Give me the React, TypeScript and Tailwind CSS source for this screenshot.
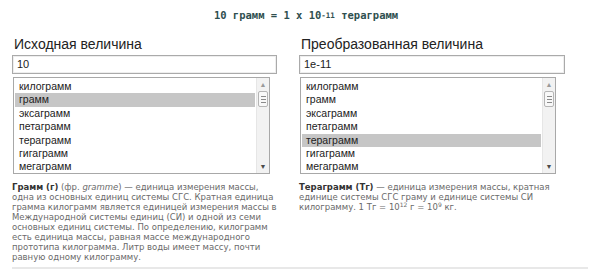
import React from 'react';

const units = ['килограмм', 'грамм', 'эксаграмм', 'петаграмм', 'тераграмм', 'гигаграмм', 'мегаграмм'];

const Scrollbar: React.FC = () => (
    <div className="flex flex-col w-[13px] bg-[#f2f2f2] border-l border-[#e6e6e6]">
        <div className="h-[13px] flex items-center justify-center text-[#9a9a9a] text-[7px] leading-none">▲</div>
        <div className="h-[16px] mx-[1px] bg-[#f8f8f8] border border-[#b5b5b5] rounded-[2px] flex flex-col items-center justify-center gap-[2px]">
            <div className="w-[5px] h-px bg-[#8a8a8a]" />
            <div className="w-[5px] h-px bg-[#8a8a8a]" />
            <div className="w-[5px] h-px bg-[#8a8a8a]" />
        </div>
        <div className="flex-1" />
        <div className="h-[13px] flex items-center justify-center text-[#4a4a4a] text-[7px] leading-none">▼</div>
    </div>
);

interface ColumnProps {
    title: string;
    value: string;
    selected: number;
    inputWidth: string;
    listWidth: string;
    children: React.ReactNode;
}

const Column: React.FC<ColumnProps> = ({ title, value, selected, inputWidth, listWidth, children }) => (
    <div className="flex flex-col">
        <h2 className="text-[14px] leading-[18px] pl-[2px] text-[#222] font-['Liberation_Sans',Arial,sans-serif]">{title}</h2>
        <div className={`${inputWidth} h-[19px] mt-[2px] border border-[#aaa] shadow-[inset_0_0_0_1px_#eee] px-[4px] flex items-center text-[11px] text-[#222] font-['Liberation_Sans',Arial,sans-serif]`}>
            {value}
        </div>
        <div className={`${listWidth} h-[97px] mt-[3px] ml-[1px] border border-[#a8a8a8] flex bg-white`}>
            <div className="flex-1 flex flex-col pt-[2px] pl-[1px] pr-[1px]">
                {units.map((u, i) => (
                    <div
                        key={u}
                        className={`h-[13.4px] leading-[13.4px] pl-[4px] text-[10.5px] text-[#222] font-['Liberation_Sans',Arial,sans-serif] ${i === selected ? 'bg-[#c6c6c6]' : ''}`}
                    >
                        {u}
                    </div>
                ))}
            </div>
            <Scrollbar />
        </div>
        <div className="mt-[8px] text-[8.5px] leading-[10px] text-[#6a6a6a] font-['DejaVu_Sans',Verdana,sans-serif] w-[268px]">
            {children}
        </div>
    </div>
);

export default function App() {
    return (
        <div className="w-[600px] h-[273px] bg-white overflow-hidden">
            <div className="pt-[9px] pl-[12px] text-center text-[10.5px] leading-[12px] font-bold text-[#2f4f4f] font-['DejaVu_Sans_Mono',monospace]">
                10 грамм = 1 x 10<sup className="text-[7.5px] relative -top-[1px]">-11</sup> тераграмм
            </div>
            <div className="flex gap-[19px] pl-[12px] mt-[14px] h-[232px]">
                <Column title="Исходная величина" value="10" selected={1} inputWidth="w-[265px]" listWidth="w-[257px]">
                    <b className="text-[#333]">Грамм (г)</b> (фр. <i>gramme</i>) — единица измерения массы, одна из основных единиц системы СГС. Кратная единица грамма килограмм является единицей измерения массы в Международной системы единиц (СИ) и одной из семи основных единиц системы. По определению, килограмм есть единица массы, равная массе международного прототипа килограмма. Литр воды имеет массу, почти равную одному килограмму.
                </Column>
                <Column title="Преобразованная величина" value="1e-11" selected={4} inputWidth="w-[266px]" listWidth="w-[256px]">
                    <b className="text-[#333]">Тераграмм (Тг)</b> — единица измерения массы, кратная единице системы СГС граму и единице системы СИ килограмму. 1 Тг = 10<sup className="text-[6px]">12</sup> г = 10<sup className="text-[6px]">9</sup> кг.
                </Column>
            </div>
            <div className="mx-[12px] border-t-2 border-[#e8e8e8]" />
        </div>
    );
}
